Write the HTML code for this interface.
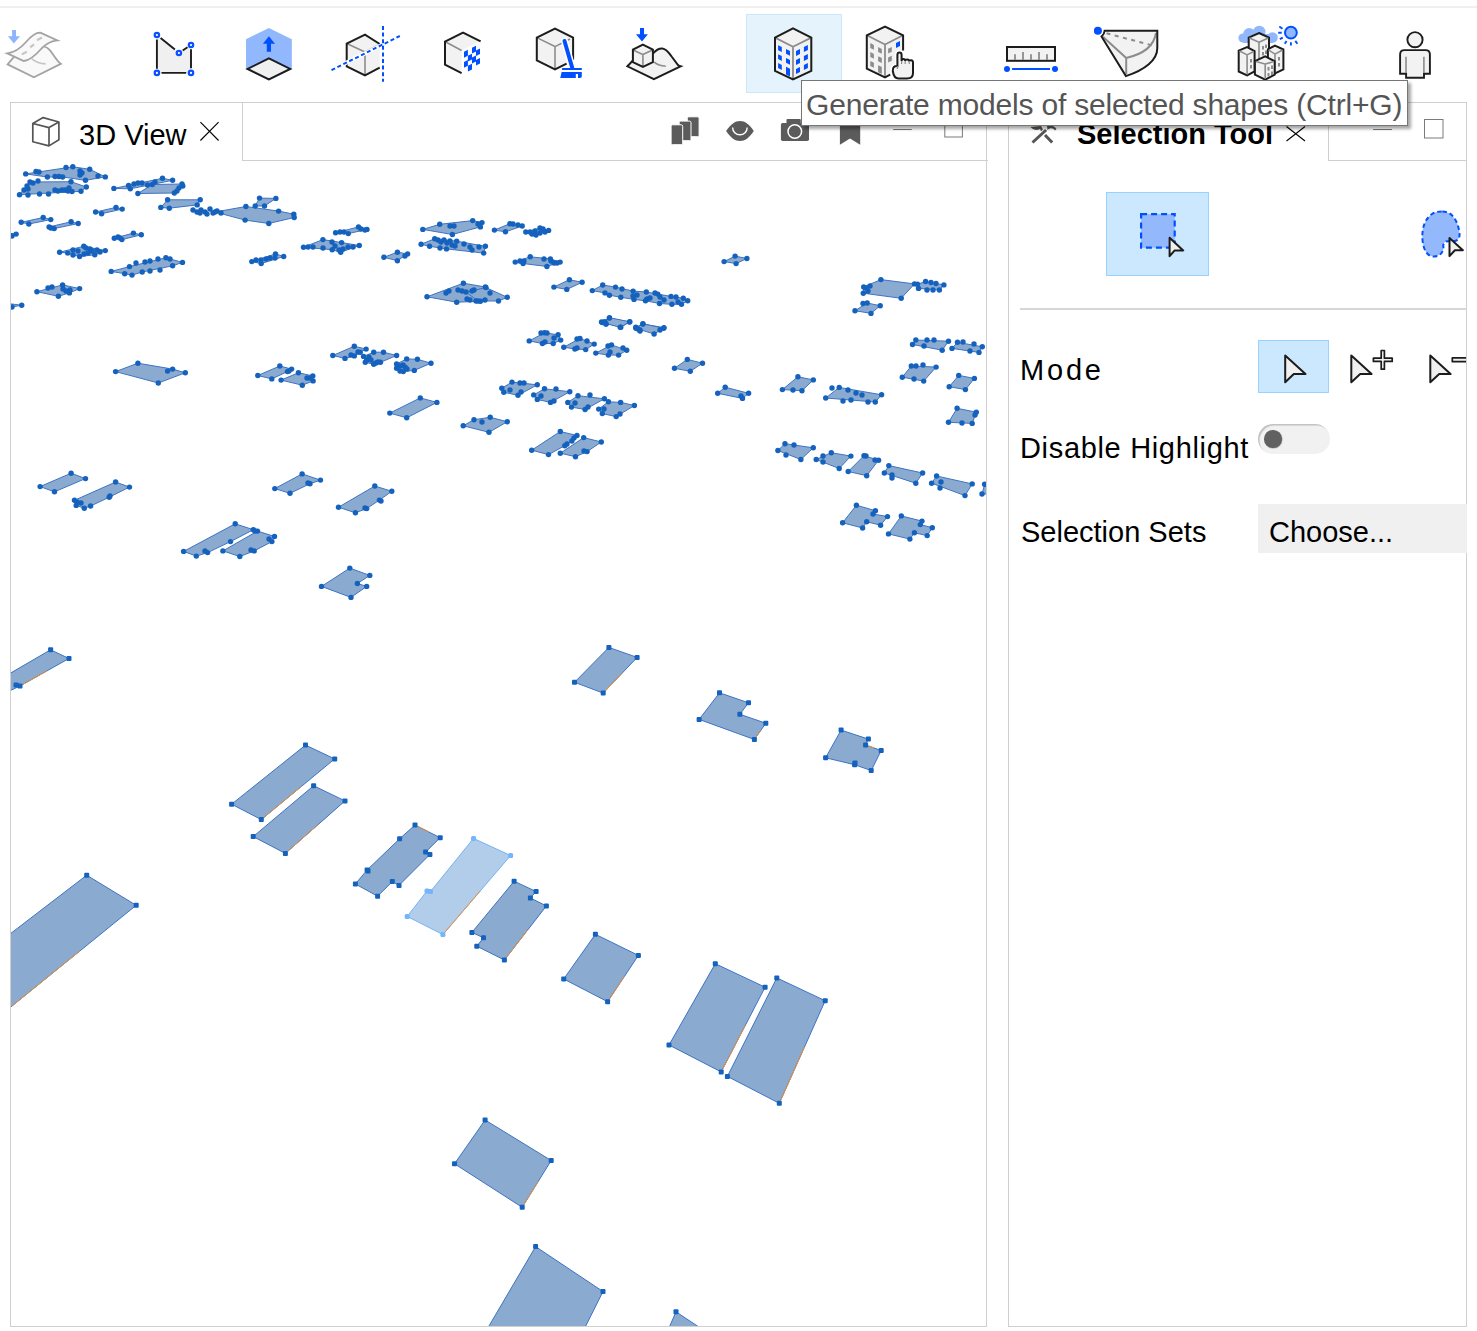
<!DOCTYPE html>
<html><head><meta charset="utf-8">
<style>
html,body{margin:0;padding:0;width:1477px;height:1331px;overflow:hidden;background:#fff;font-family:"Liberation Sans",sans-serif;}
.a{position:absolute;}
.t{position:absolute;white-space:nowrap;line-height:29px;font-size:29px;color:#000;}
.ln{position:absolute;background:#cfcfcf;}
</style></head><body>
<!-- top strip line -->
<div class="a" style="left:0;top:6px;width:1477px;height:2px;background:#efefef"></div>

<!-- toolbar highlight -->
<div class="a" style="left:746px;top:14px;width:94px;height:77px;background:#e5f3fd;border:1px solid #cde6fa"></div>

<!-- 3D view panel -->
<div class="ln" style="left:10px;top:102px;width:1px;height:1225px"></div>
<div class="ln" style="left:10px;top:102px;width:233px;height:1px"></div>
<div class="ln" style="left:242px;top:102px;width:1px;height:59px"></div>
<div class="ln" style="left:242px;top:160px;width:746px;height:1px"></div>
<div class="ln" style="left:986px;top:102px;width:1px;height:1225px"></div>
<div class="ln" style="left:10px;top:1326px;width:977px;height:1px"></div>
<div class="ln" style="left:242px;top:102px;width:745px;height:1px"></div>

<div class="t" id="t3d" style="left:79px;top:121px;">3D View</div>

<!-- right panel -->
<div class="ln" style="left:1008px;top:102px;width:1px;height:1225px"></div>
<div class="ln" style="left:1008px;top:102px;width:459px;height:1px"></div>
<div class="ln" style="left:1328px;top:102px;width:1px;height:59px"></div>
<div class="ln" style="left:1328px;top:160px;width:139px;height:1px"></div>
<div class="ln" style="left:1466px;top:102px;width:1px;height:1225px"></div>
<div class="ln" style="left:1008px;top:1326px;width:459px;height:1px"></div>

<div class="t" id="tsel" style="left:1077px;top:120px;font-weight:bold">Selection Tool</div>

<div class="a" style="left:1106px;top:192px;width:101px;height:82px;background:#cce8ff;border:1px solid #99d1ff"></div>
<div class="ln" style="left:1020px;top:308px;width:447px;height:2px;background:#d6d6d6"></div>

<div class="t" id="tmode" style="left:1020px;top:356px;letter-spacing:2.8px">Mode</div>
<div class="a" style="left:1258px;top:340px;width:69px;height:51px;background:#cce8ff;border:1px solid #99d1ff"></div>
<div class="t" id="tdis" style="left:1020px;top:434px;letter-spacing:0.67px">Disable Highlight</div>
<div class="a" style="left:1258px;top:424px;width:72px;height:30px;background:#f1f1f1;border-radius:15px;box-shadow:inset 1.5px 1.5px 1px rgba(0,0,0,0.2)"></div>
<div class="a" style="left:1264.2px;top:430px;width:17.6px;height:17.6px;background:#616161;border-radius:50%;box-shadow:0.5px 0.5px 1px rgba(0,0,0,0.3)"></div>
<div class="t" id="tsets" style="left:1021px;top:518px;">Selection Sets</div>
<div class="a" style="left:1258px;top:504px;width:209px;height:49px;background:#f0f0f0"></div>
<div class="t" id="tchoose" style="left:1269px;top:518px;">Choose...</div>

<svg class="a" style="left:0;top:0" width="1477" height="1331" viewBox="0 0 1477 1331">
<defs><clipPath id="vc"><rect x="11" y="161" width="975" height="1165"/></clipPath></defs>
<g clip-path="url(#vc)">
<g fill="#8aabcf" stroke="#3d73c5" stroke-width="1"><polygon points="50.6,649.8 69,658.5 20,686 -10,700 -10,685"/><polygon points="305.5,745.1 334.7,758.9 261.3,819.6 231.6,804.2"/><polygon points="313.6,785.7 345,800.9 285.4,853.4 253.2,836.6"/><polygon points="86.7,875.2 136.2,905.3 -20,1032 -20,957"/><polygon points="415,825 440.2,837.7 425.6,852.1 429.9,854.5 399,885.4 392.3,881.6 377.6,896.2 355.4,884 367.1,870 399.6,838.8"/><polygon points="514.1,881.2 536.1,891.5 530.4,898 546.4,905.9 504.4,960 476.8,946.2 483.5,937.8 471.9,932.4"/><polygon points="595.4,934.3 638.4,955.4 607.6,1001.7 563.7,979"/><polygon points="608.9,647.4 637.1,657.4 603.2,693.1 574.5,682.3"/><polygon points="719.5,692.8 748.5,702.8 739.9,714.3 765.8,723.2 754.4,739.5 699.1,719.4"/><polygon points="841.1,730.1 868.4,739.1 865.6,745 881.2,750.5 871.2,770.6 854.6,764.7 825.6,757.8"/><polygon points="715.3,963.7 765.1,987.2 721.2,1071.9 669,1045"/><polygon points="776.8,977.9 825.2,1000.7 779.3,1103.3 727.4,1076.4"/><polygon points="485.1,1120 551.2,1160.5 522.2,1207.3 454.5,1163.8"/><polygon points="535.6,1246.6 603,1291.5 568.7,1360 469,1360"/><polygon points="676,1311.8 726,1345 661.5,1345"/><polygon points="880.9,279.6 914.5,283.9 901.2,298.3 863.3,293.2 863.7,287"/><polygon points="917.5,284.3 925.6,281.5 943.9,284.9 939.4,290 918.5,288.4"/><polygon points="867.2,303 880.2,305.7 871,313.4 855,310.7"/><polygon points="915.8,340 948.5,341.2 942.2,350.2 912.5,344.5"/><polygon points="957.5,342.3 982.3,346.8 979,352.4 952,348.4"/><polygon points="911.3,366 936.1,367.1 923.7,381.1 902.3,377.2"/><polygon points="958.7,375.4 974.4,378.4 965.4,389.6 949.2,386.7"/><polygon points="957.1,408.3 976.3,412.2 972.2,423.4 948.5,422.3"/><polygon points="797.9,376.8 813.3,379.9 802,390.7 782.4,389.6"/><polygon points="839.2,387.4 881.6,394.8 875.3,402 825.7,398"/><polygon points="785,443.7 813.3,447.8 800.9,459.5 777.9,450.5"/><polygon points="831.3,452.7 850.9,456.1 839.2,468.5 816.2,459.5"/><polygon points="864,455.7 878.6,460.2 866.7,475.7 848.2,471.5"/><polygon points="888.8,465.6 922.6,473 915.8,483.2 884.3,473"/><polygon points="936.6,476 972.2,483.9 965,495.6 931.6,483.2"/><polygon points="984.6,484.3 1000,488 1000,494 982,494"/><polygon points="856.4,505.2 875.4,510.7 873,514 887.5,516.6 880.6,525.2 866.7,521.8 862.6,528 842.6,522.8"/><polygon points="901.3,515.9 922,521.1 920.3,524.6 932.3,527.7 927.2,535.6 914.4,532.8 909.9,539.1 888.5,533.9"/><polygon points="735.1,256.1 746.9,258.5 736.1,263.6 724.1,261.6"/><polygon points="717.7,393.3 725.2,387.2 748.6,393.3 742.5,398.4"/><polygon points="25.7,173.9 72.8,166.8 89.7,169.3 105.3,176.9 85.5,180.3 62.6,177 47.4,177"/><polygon points="30,182 71,181.7 86.3,187 81,191.3 19.5,194.7"/><polygon points="113.9,188.4 162.5,178.3 172.6,180.3 130.3,188.8"/><polygon points="152.3,184.5 182,184 182.8,186 174.3,193 137.9,193.5"/><polygon points="167.6,199.8 200.2,199.8 197.2,204.9 169.3,208.2 160.8,207.4"/><polygon points="215,212 245.9,206.5 278.6,211.1 293.8,214.2 294.2,217.5 268.8,223.5 245.1,220.1"/><polygon points="259.5,198.1 275.9,198.4 264.5,206 255.2,206"/><polygon points="95.6,212 116,207.4 122.2,209.1 101.6,213.7"/><polygon points="21.2,222.3 43.2,217.5 50.8,219.6 28.8,224"/><polygon points="49.1,226.9 71.1,221.8 78.2,223.5 54.2,228.6"/><polygon points="5,233 16.1,234.1 12,236"/><polygon points="114.3,238.2 133.4,233.1 141.3,234.8 121.9,239.6"/><polygon points="59.6,252.2 83.8,246.3 105.3,250.6 94.8,254.8 79.6,256.5 67.7,253.1"/><polygon points="111.2,271.4 129.5,266.6 165.9,257.8 182.5,262.4 172.6,265.8 142.2,272 132,275.1 124.7,273.7"/><polygon points="36.9,291.7 62.6,284.9 79.6,288.6 69.4,292.9 58.4,296.3"/><polygon points="-5,302 21.7,305.2 12,307"/><polygon points="335.6,232.8 358.5,226.9 367,229.4 348.3,233.6"/><polygon points="303.5,247.2 322.9,239.6 341.6,242.6 359.3,245.5 340.7,252.2 332.2,249.7"/><polygon points="251.8,261.6 275.5,253.9 283.7,256.5 261.2,263.6"/><polygon points="383.9,257.3 397.4,252.2 407.6,253.9 397.4,260.7"/><polygon points="422.8,229.4 439.7,224.3 472.7,220.6 482,222.6 480.4,226.9 452.4,234.5"/><polygon points="421.1,244.3 434.7,238.7 456.7,241.2 485.4,246.3 483.7,253.1 446.5,248.9 429.6,246.3"/><polygon points="427,296.8 463.4,283.2 485.4,287 480.4,301.3 456.7,302.2"/><polygon points="466,292 486,287.6 507.3,297.3 498.5,301 478,301"/><polygon points="494.4,230.1 509.9,223.7 522.2,226 505.5,231.8"/><polygon points="525.8,232 540,228 548.6,230.4 536,235"/><polygon points="515.2,262.1 530.2,256.8 550.4,258.9 560.1,262.1 546.9,266.5 523.1,263.5"/><polygon points="553.9,287.1 569.4,279.7 582.1,282.3 566.8,289.4"/><polygon points="592.3,290.6 602.7,285 615.5,287.1 633.1,291.1 646.3,292 657.8,294.1 671,296.4 683.3,298.2 687.7,300.8 681.5,304.3 671.9,304.3 659.5,303.5 645.5,300.8 634,299.4 620.8,297.3 609.4,295.2 605,292.9"/><polygon points="601.5,322 609.4,318.1 629.6,322 620.8,327.2"/><polygon points="635.8,327.2 642.8,324.1 664,327.6 660,330 640,330"/><polygon points="115.6,371.6 137.9,363.2 172.6,369.1 185.3,372.8 158.3,383"/><polygon points="71.1,473.2 85.5,478.6 54.5,491.8 40.1,486.6"/><polygon points="115.6,482 129.5,487.1 109.2,497.2 90.6,506 84.3,508.2 76.2,505.4 74.5,500.3"/><polygon points="235.2,523.8 253.3,529.7 230.5,541.6 207.6,552.6 196.3,556.1 183.6,551.4"/><polygon points="257.5,531.1 274.5,536.5 271.9,541.6 254.2,550.9 239.8,556.5 222.9,550.9"/><polygon points="302.1,473.9 320.5,480.1 310,483.7 290,493.3 274.8,488.6"/><polygon points="374.8,486 391.8,491.3 379.4,500.1 366.7,508.6 355.4,512.8 338.5,507.2"/><polygon points="349.8,568.1 369.8,575.4 357.4,583.5 366.7,586.4 351,597.4 321.5,586.4"/><polygon points="279.8,366 291.6,369.1 287.4,371.6 271.8,378.9 257.8,375.5"/><polygon points="298.4,372.8 312.8,375.9 313.1,380.9 302.3,385.2 281.1,380.1"/><polygon points="354.3,346.2 366.1,349.1 360.2,352.2 354.3,355.9 345,358.4 332.8,355.5"/><polygon points="373.7,352.2 383.5,352.2 396.6,355.5 380.5,362.3 373.7,364.3 365.3,362.3 363.6,356.4"/><polygon points="406.7,358.9 417.4,359.3 431,363.2 414.3,370.4 403.3,371.6 396.6,368.2 396.6,364"/><polygon points="420.3,397.9 436.9,402.4 406.7,417.8 389.8,413.1"/><polygon points="609.5,317.7 629.8,321.8 620.2,327.3 602.3,322.6"/><polygon points="643,323.8 663.7,328.3 654.1,334 635.9,328.3"/><polygon points="544.5,332.8 558.1,334.8 560.7,340.1 553.2,343.5 542.4,343.5 529.2,340.9"/><polygon points="580,338.4 594.2,344.1 585.7,349.6 574.9,349 563.8,347.2"/><polygon points="611.5,344.9 626.7,350.2 618.6,355.1 608.4,355.1 595.8,353.1"/><polygon points="687.3,359.4 702.5,363.2 690.3,371.3 674.5,368.3"/><polygon points="512,382.1 537.3,384.8 518,395.3 503.8,392.3 501.8,388.2"/><polygon points="544.5,388.8 569.8,391.7 550.5,402.4 537.3,399.4 533.7,394.9"/><polygon points="578,395.7 604.4,398.8 585.1,409.5 571.5,407.1 567.8,402.4"/><polygon points="608.4,401.8 620.6,402.4 634.4,405.5 616.2,416.6 602.3,413.6 598.7,409.1"/><polygon points="474,419.7 490.2,417.3 507.3,421.7 489,432.3 463.2,425.8"/><polygon points="560.3,431.5 577,435.5 571.9,441 564.8,445.7 548.5,454.6 531.7,450.2"/><polygon points="583.7,437.6 601.3,442 587.1,451.6 575.5,456.7 560.3,453.2"/></g>
<polygon points="473.5,838.4 510.6,855.5 442.9,934.6 407.2,916.4 427,891 430.5,891.5" fill="#b1cdea" stroke="#72b2f7" stroke-width="1"/>
<path d="M20,686L47,670.9M261.3,819.6L301.7,786.2M285.4,853.4L318.2,824.5M12,1006L80.3,950.6M442.9,934.6L480.1,891.1M504.4,960L527.5,930.2M607.6,1001.7L624.5,976.2M603.2,693.1L621.8,673.5M754.4,739.5L760.7,730.5M721.2,1071.9L745.3,1025.3M779.3,1103.3L804.5,1046.9M522.2,1207.3L538.2,1181.6M415,825L428.9,832M865.6,745L874.2,748" stroke="#e8903a" stroke-width="1" fill="none"/>
<g fill="#1462be"><rect x="48.1" y="647.3" width="5" height="5" rx="1"/><rect x="66.5" y="656" width="5" height="5" rx="1"/><rect x="17.5" y="683.5" width="5" height="5" rx="1"/><rect x="-12.5" y="697.5" width="5" height="5" rx="1"/><rect x="-12.5" y="682.5" width="5" height="5" rx="1"/><rect x="13.5" y="682.5" width="5" height="5" rx="1"/><rect x="303" y="742.6" width="5" height="5" rx="1"/><rect x="332.2" y="756.4" width="5" height="5" rx="1"/><rect x="258.8" y="817.1" width="5" height="5" rx="1"/><rect x="229.1" y="801.7" width="5" height="5" rx="1"/><rect x="311.1" y="783.2" width="5" height="5" rx="1"/><rect x="342.5" y="798.4" width="5" height="5" rx="1"/><rect x="282.9" y="850.9" width="5" height="5" rx="1"/><rect x="250.7" y="834.1" width="5" height="5" rx="1"/><rect x="84.2" y="872.7" width="5" height="5" rx="1"/><rect x="133.7" y="902.8" width="5" height="5" rx="1"/><rect x="-22.5" y="1029.5" width="5" height="5" rx="1"/><rect x="-22.5" y="954.5" width="5" height="5" rx="1"/><rect x="412.5" y="822.5" width="5" height="5" rx="1"/><rect x="437.7" y="835.2" width="5" height="5" rx="1"/><rect x="423.1" y="849.6" width="5" height="5" rx="1"/><rect x="427.4" y="852" width="5" height="5" rx="1"/><rect x="396.5" y="882.9" width="5" height="5" rx="1"/><rect x="389.8" y="879.1" width="5" height="5" rx="1"/><rect x="375.1" y="893.7" width="5" height="5" rx="1"/><rect x="352.9" y="881.5" width="5" height="5" rx="1"/><rect x="364.6" y="867.5" width="5" height="5" rx="1"/><rect x="397.1" y="836.3" width="5" height="5" rx="1"/><rect x="365.5" y="868.5" width="5" height="5" rx="1"/><rect x="511.6" y="878.7" width="5" height="5" rx="1"/><rect x="533.6" y="889" width="5" height="5" rx="1"/><rect x="527.9" y="895.5" width="5" height="5" rx="1"/><rect x="543.9" y="903.4" width="5" height="5" rx="1"/><rect x="501.9" y="957.5" width="5" height="5" rx="1"/><rect x="474.3" y="943.7" width="5" height="5" rx="1"/><rect x="481" y="935.3" width="5" height="5" rx="1"/><rect x="469.4" y="929.9" width="5" height="5" rx="1"/><rect x="592.9" y="931.8" width="5" height="5" rx="1"/><rect x="635.9" y="952.9" width="5" height="5" rx="1"/><rect x="605.1" y="999.2" width="5" height="5" rx="1"/><rect x="561.2" y="976.5" width="5" height="5" rx="1"/><rect x="606.4" y="644.9" width="5" height="5" rx="1"/><rect x="634.6" y="654.9" width="5" height="5" rx="1"/><rect x="600.7" y="690.6" width="5" height="5" rx="1"/><rect x="572" y="679.8" width="5" height="5" rx="1"/><rect x="717" y="690.3" width="5" height="5" rx="1"/><rect x="746" y="700.3" width="5" height="5" rx="1"/><rect x="737.4" y="711.8" width="5" height="5" rx="1"/><rect x="763.3" y="720.7" width="5" height="5" rx="1"/><rect x="751.9" y="737" width="5" height="5" rx="1"/><rect x="696.6" y="716.9" width="5" height="5" rx="1"/><rect x="838.6" y="727.6" width="5" height="5" rx="1"/><rect x="865.9" y="736.6" width="5" height="5" rx="1"/><rect x="863.1" y="742.5" width="5" height="5" rx="1"/><rect x="878.7" y="748" width="5" height="5" rx="1"/><rect x="868.7" y="768.1" width="5" height="5" rx="1"/><rect x="852.1" y="762.2" width="5" height="5" rx="1"/><rect x="823.1" y="755.3" width="5" height="5" rx="1"/><rect x="852.5" y="760.5" width="5" height="5" rx="1"/><rect x="712.8" y="961.2" width="5" height="5" rx="1"/><rect x="762.6" y="984.7" width="5" height="5" rx="1"/><rect x="718.7" y="1069.4" width="5" height="5" rx="1"/><rect x="666.5" y="1042.5" width="5" height="5" rx="1"/><rect x="774.3" y="975.4" width="5" height="5" rx="1"/><rect x="822.7" y="998.2" width="5" height="5" rx="1"/><rect x="776.8" y="1100.8" width="5" height="5" rx="1"/><rect x="724.9" y="1073.9" width="5" height="5" rx="1"/><rect x="482.6" y="1117.5" width="5" height="5" rx="1"/><rect x="548.7" y="1158" width="5" height="5" rx="1"/><rect x="519.7" y="1204.8" width="5" height="5" rx="1"/><rect x="452" y="1161.3" width="5" height="5" rx="1"/><rect x="533.1" y="1244.1" width="5" height="5" rx="1"/><rect x="600.5" y="1289" width="5" height="5" rx="1"/><rect x="566.2" y="1357.5" width="5" height="5" rx="1"/><rect x="466.5" y="1357.5" width="5" height="5" rx="1"/><rect x="673.5" y="1309.3" width="5" height="5" rx="1"/><rect x="723.5" y="1342.5" width="5" height="5" rx="1"/><rect x="659" y="1342.5" width="5" height="5" rx="1"/><circle cx="880.9" cy="279.6" r="2.7"/><circle cx="914.5" cy="283.9" r="2.7"/><circle cx="901.2" cy="298.3" r="2.7"/><circle cx="863.3" cy="293.2" r="2.7"/><circle cx="863.7" cy="287" r="2.7"/><circle cx="866" cy="288" r="2.7"/><circle cx="870" cy="286" r="2.7"/><circle cx="868" cy="291" r="2.7"/><circle cx="917.5" cy="284.3" r="2.7"/><circle cx="925.6" cy="281.5" r="2.7"/><circle cx="943.9" cy="284.9" r="2.7"/><circle cx="939.4" cy="290" r="2.7"/><circle cx="918.5" cy="288.4" r="2.7"/><circle cx="931" cy="282.5" r="2.7"/><circle cx="936" cy="283.5" r="2.7"/><circle cx="933" cy="290" r="2.7"/><circle cx="927" cy="290" r="2.7"/><circle cx="867.2" cy="303" r="2.7"/><circle cx="880.2" cy="305.7" r="2.7"/><circle cx="871" cy="313.4" r="2.7"/><circle cx="855" cy="310.7" r="2.7"/><circle cx="863" cy="303.5" r="2.7"/><circle cx="915.8" cy="340" r="2.7"/><circle cx="948.5" cy="341.2" r="2.7"/><circle cx="942.2" cy="350.2" r="2.7"/><circle cx="912.5" cy="344.5" r="2.7"/><circle cx="927" cy="340" r="2.7"/><circle cx="934" cy="340" r="2.7"/><circle cx="924" cy="346" r="2.7"/><circle cx="957.5" cy="342.3" r="2.7"/><circle cx="982.3" cy="346.8" r="2.7"/><circle cx="979" cy="352.4" r="2.7"/><circle cx="952" cy="348.4" r="2.7"/><circle cx="963" cy="342" r="2.7"/><circle cx="974" cy="344" r="2.7"/><circle cx="970" cy="351" r="2.7"/><circle cx="911.3" cy="366" r="2.7"/><circle cx="936.1" cy="367.1" r="2.7"/><circle cx="923.7" cy="381.1" r="2.7"/><circle cx="902.3" cy="377.2" r="2.7"/><circle cx="916" cy="366" r="2.7"/><circle cx="923" cy="365" r="2.7"/><circle cx="914" cy="379" r="2.7"/><circle cx="958.7" cy="375.4" r="2.7"/><circle cx="974.4" cy="378.4" r="2.7"/><circle cx="965.4" cy="389.6" r="2.7"/><circle cx="949.2" cy="386.7" r="2.7"/><circle cx="957.1" cy="408.3" r="2.7"/><circle cx="976.3" cy="412.2" r="2.7"/><circle cx="972.2" cy="423.4" r="2.7"/><circle cx="948.5" cy="422.3" r="2.7"/><circle cx="975" cy="415" r="2.7"/><circle cx="962" cy="423" r="2.7"/><circle cx="797.9" cy="376.8" r="2.7"/><circle cx="813.3" cy="379.9" r="2.7"/><circle cx="802" cy="390.7" r="2.7"/><circle cx="782.4" cy="389.6" r="2.7"/><circle cx="793" cy="390" r="2.7"/><circle cx="839.2" cy="387.4" r="2.7"/><circle cx="881.6" cy="394.8" r="2.7"/><circle cx="875.3" cy="402" r="2.7"/><circle cx="825.7" cy="398" r="2.7"/><circle cx="832" cy="388" r="2.7"/><circle cx="848" cy="390" r="2.7"/><circle cx="856" cy="393" r="2.7"/><circle cx="862" cy="395" r="2.7"/><circle cx="843" cy="401" r="2.7"/><circle cx="851" cy="400" r="2.7"/><circle cx="868" cy="402" r="2.7"/><circle cx="785" cy="443.7" r="2.7"/><circle cx="813.3" cy="447.8" r="2.7"/><circle cx="800.9" cy="459.5" r="2.7"/><circle cx="777.9" cy="450.5" r="2.7"/><circle cx="794" cy="445" r="2.7"/><circle cx="786" cy="455" r="2.7"/><circle cx="831.3" cy="452.7" r="2.7"/><circle cx="850.9" cy="456.1" r="2.7"/><circle cx="839.2" cy="468.5" r="2.7"/><circle cx="816.2" cy="459.5" r="2.7"/><circle cx="823" cy="456" r="2.7"/><circle cx="823" cy="462" r="2.7"/><circle cx="864" cy="455.7" r="2.7"/><circle cx="878.6" cy="460.2" r="2.7"/><circle cx="866.7" cy="475.7" r="2.7"/><circle cx="848.2" cy="471.5" r="2.7"/><circle cx="866" cy="456" r="2.7"/><circle cx="875" cy="460" r="2.7"/><circle cx="888.8" cy="465.6" r="2.7"/><circle cx="922.6" cy="473" r="2.7"/><circle cx="915.8" cy="483.2" r="2.7"/><circle cx="884.3" cy="473" r="2.7"/><circle cx="892" cy="475" r="2.7"/><circle cx="892" cy="478" r="2.7"/><circle cx="936.6" cy="476" r="2.7"/><circle cx="972.2" cy="483.9" r="2.7"/><circle cx="965" cy="495.6" r="2.7"/><circle cx="931.6" cy="483.2" r="2.7"/><circle cx="941" cy="482" r="2.7"/><circle cx="940" cy="488" r="2.7"/><circle cx="984.6" cy="484.3" r="2.7"/><circle cx="1000" cy="488" r="2.7"/><circle cx="1000" cy="494" r="2.7"/><circle cx="982" cy="494" r="2.7"/><circle cx="856.4" cy="505.2" r="2.7"/><circle cx="875.4" cy="510.7" r="2.7"/><circle cx="873" cy="514" r="2.7"/><circle cx="887.5" cy="516.6" r="2.7"/><circle cx="880.6" cy="525.2" r="2.7"/><circle cx="866.7" cy="521.8" r="2.7"/><circle cx="862.6" cy="528" r="2.7"/><circle cx="842.6" cy="522.8" r="2.7"/><circle cx="901.3" cy="515.9" r="2.7"/><circle cx="922" cy="521.1" r="2.7"/><circle cx="920.3" cy="524.6" r="2.7"/><circle cx="932.3" cy="527.7" r="2.7"/><circle cx="927.2" cy="535.6" r="2.7"/><circle cx="914.4" cy="532.8" r="2.7"/><circle cx="909.9" cy="539.1" r="2.7"/><circle cx="888.5" cy="533.9" r="2.7"/><circle cx="735.1" cy="256.1" r="2.7"/><circle cx="746.9" cy="258.5" r="2.7"/><circle cx="736.1" cy="263.6" r="2.7"/><circle cx="724.1" cy="261.6" r="2.7"/><circle cx="717.7" cy="393.3" r="2.7"/><circle cx="725.2" cy="387.2" r="2.7"/><circle cx="748.6" cy="393.3" r="2.7"/><circle cx="742.5" cy="398.4" r="2.7"/><circle cx="741" cy="396" r="2.7"/><circle cx="25.7" cy="173.9" r="2.7"/><circle cx="72.8" cy="166.8" r="2.7"/><circle cx="89.7" cy="169.3" r="2.7"/><circle cx="105.3" cy="176.9" r="2.7"/><circle cx="85.5" cy="180.3" r="2.7"/><circle cx="62.6" cy="177" r="2.7"/><circle cx="47.4" cy="177" r="2.7"/><circle cx="36" cy="171.5" r="2.7"/><circle cx="39" cy="172" r="2.7"/><circle cx="66" cy="167.5" r="2.7"/><circle cx="82" cy="173" r="2.7"/><circle cx="80" cy="171" r="2.7"/><circle cx="98" cy="176" r="2.7"/><circle cx="55" cy="176.5" r="2.7"/><circle cx="59" cy="176.5" r="2.7"/><circle cx="80" cy="175" r="2.7"/><circle cx="30" cy="182" r="2.7"/><circle cx="71" cy="181.7" r="2.7"/><circle cx="86.3" cy="187" r="2.7"/><circle cx="81" cy="191.3" r="2.7"/><circle cx="19.5" cy="194.7" r="2.7"/><circle cx="28" cy="195" r="2.7"/><circle cx="39.5" cy="194" r="2.7"/><circle cx="48.5" cy="194" r="2.7"/><circle cx="55" cy="190" r="2.7"/><circle cx="58" cy="191" r="2.7"/><circle cx="62" cy="190" r="2.7"/><circle cx="68" cy="191" r="2.7"/><circle cx="72" cy="191.5" r="2.7"/><circle cx="38" cy="181" r="2.7"/><circle cx="33" cy="183" r="2.7"/><circle cx="27" cy="186" r="2.7"/><circle cx="24" cy="190" r="2.7"/><circle cx="28" cy="189" r="2.7"/><circle cx="65" cy="190" r="2.7"/><circle cx="69" cy="188" r="2.7"/><circle cx="113.9" cy="188.4" r="2.7"/><circle cx="162.5" cy="178.3" r="2.7"/><circle cx="172.6" cy="180.3" r="2.7"/><circle cx="130.3" cy="188.8" r="2.7"/><circle cx="128.6" cy="185.4" r="2.7"/><circle cx="134" cy="184" r="2.7"/><circle cx="138" cy="183" r="2.7"/><circle cx="142" cy="183" r="2.7"/><circle cx="152.3" cy="184.5" r="2.7"/><circle cx="182" cy="184" r="2.7"/><circle cx="182.8" cy="186" r="2.7"/><circle cx="174.3" cy="193" r="2.7"/><circle cx="137.9" cy="193.5" r="2.7"/><circle cx="147.5" cy="185" r="2.7"/><circle cx="155" cy="182" r="2.7"/><circle cx="179" cy="188" r="2.7"/><circle cx="177" cy="191" r="2.7"/><circle cx="167.6" cy="199.8" r="2.7"/><circle cx="200.2" cy="199.8" r="2.7"/><circle cx="197.2" cy="204.9" r="2.7"/><circle cx="169.3" cy="208.2" r="2.7"/><circle cx="160.8" cy="207.4" r="2.7"/><circle cx="215" cy="212" r="2.7"/><circle cx="245.9" cy="206.5" r="2.7"/><circle cx="278.6" cy="211.1" r="2.7"/><circle cx="293.8" cy="214.2" r="2.7"/><circle cx="294.2" cy="217.5" r="2.7"/><circle cx="268.8" cy="223.5" r="2.7"/><circle cx="245.1" cy="220.1" r="2.7"/><circle cx="193" cy="210" r="2.7"/><circle cx="197" cy="212" r="2.7"/><circle cx="201" cy="210" r="2.7"/><circle cx="205" cy="212" r="2.7"/><circle cx="210" cy="209" r="2.7"/><circle cx="213" cy="213" r="2.7"/><circle cx="217" cy="211" r="2.7"/><circle cx="221" cy="213" r="2.7"/><circle cx="200" cy="213" r="2.7"/><circle cx="207" cy="214" r="2.7"/><circle cx="259.5" cy="198.1" r="2.7"/><circle cx="275.9" cy="198.4" r="2.7"/><circle cx="264.5" cy="206" r="2.7"/><circle cx="255.2" cy="206" r="2.7"/><circle cx="95.6" cy="212" r="2.7"/><circle cx="116" cy="207.4" r="2.7"/><circle cx="122.2" cy="209.1" r="2.7"/><circle cx="101.6" cy="213.7" r="2.7"/><circle cx="21.2" cy="222.3" r="2.7"/><circle cx="43.2" cy="217.5" r="2.7"/><circle cx="50.8" cy="219.6" r="2.7"/><circle cx="28.8" cy="224" r="2.7"/><circle cx="49.1" cy="226.9" r="2.7"/><circle cx="71.1" cy="221.8" r="2.7"/><circle cx="78.2" cy="223.5" r="2.7"/><circle cx="54.2" cy="228.6" r="2.7"/><circle cx="51" cy="228" r="2.7"/><circle cx="5" cy="233" r="2.7"/><circle cx="16.1" cy="234.1" r="2.7"/><circle cx="12" cy="236" r="2.7"/><circle cx="114.3" cy="238.2" r="2.7"/><circle cx="133.4" cy="233.1" r="2.7"/><circle cx="141.3" cy="234.8" r="2.7"/><circle cx="121.9" cy="239.6" r="2.7"/><circle cx="118" cy="237" r="2.7"/><circle cx="120" cy="238" r="2.7"/><circle cx="59.6" cy="252.2" r="2.7"/><circle cx="83.8" cy="246.3" r="2.7"/><circle cx="105.3" cy="250.6" r="2.7"/><circle cx="94.8" cy="254.8" r="2.7"/><circle cx="79.6" cy="256.5" r="2.7"/><circle cx="67.7" cy="253.1" r="2.7"/><circle cx="73" cy="250" r="2.7"/><circle cx="78" cy="251" r="2.7"/><circle cx="86" cy="248" r="2.7"/><circle cx="90" cy="249" r="2.7"/><circle cx="92" cy="251" r="2.7"/><circle cx="97" cy="250" r="2.7"/><circle cx="100" cy="252" r="2.7"/><circle cx="84" cy="254" r="2.7"/><circle cx="88" cy="253" r="2.7"/><circle cx="73" cy="255" r="2.7"/><circle cx="111.2" cy="271.4" r="2.7"/><circle cx="129.5" cy="266.6" r="2.7"/><circle cx="165.9" cy="257.8" r="2.7"/><circle cx="182.5" cy="262.4" r="2.7"/><circle cx="172.6" cy="265.8" r="2.7"/><circle cx="142.2" cy="272" r="2.7"/><circle cx="132" cy="275.1" r="2.7"/><circle cx="124.7" cy="273.7" r="2.7"/><circle cx="136" cy="263" r="2.7"/><circle cx="145" cy="262" r="2.7"/><circle cx="150" cy="261" r="2.7"/><circle cx="158" cy="259" r="2.7"/><circle cx="170" cy="259" r="2.7"/><circle cx="160" cy="270" r="2.7"/><circle cx="150" cy="271" r="2.7"/><circle cx="36.9" cy="291.7" r="2.7"/><circle cx="62.6" cy="284.9" r="2.7"/><circle cx="79.6" cy="288.6" r="2.7"/><circle cx="69.4" cy="292.9" r="2.7"/><circle cx="58.4" cy="296.3" r="2.7"/><circle cx="48" cy="288" r="2.7"/><circle cx="52" cy="287" r="2.7"/><circle cx="63" cy="289" r="2.7"/><circle cx="66" cy="291" r="2.7"/><circle cx="70" cy="290" r="2.7"/><circle cx="-5" cy="302" r="2.7"/><circle cx="21.7" cy="305.2" r="2.7"/><circle cx="12" cy="307" r="2.7"/><circle cx="335.6" cy="232.8" r="2.7"/><circle cx="358.5" cy="226.9" r="2.7"/><circle cx="367" cy="229.4" r="2.7"/><circle cx="348.3" cy="233.6" r="2.7"/><circle cx="340" cy="232" r="2.7"/><circle cx="344" cy="232" r="2.7"/><circle cx="361" cy="229" r="2.7"/><circle cx="365" cy="230" r="2.7"/><circle cx="303.5" cy="247.2" r="2.7"/><circle cx="322.9" cy="239.6" r="2.7"/><circle cx="341.6" cy="242.6" r="2.7"/><circle cx="359.3" cy="245.5" r="2.7"/><circle cx="340.7" cy="252.2" r="2.7"/><circle cx="332.2" cy="249.7" r="2.7"/><circle cx="308" cy="247" r="2.7"/><circle cx="313" cy="247" r="2.7"/><circle cx="323" cy="248" r="2.7"/><circle cx="332" cy="242" r="2.7"/><circle cx="335" cy="246" r="2.7"/><circle cx="339" cy="250" r="2.7"/><circle cx="343" cy="249" r="2.7"/><circle cx="348" cy="247" r="2.7"/><circle cx="353" cy="247" r="2.7"/><circle cx="251.8" cy="261.6" r="2.7"/><circle cx="275.5" cy="253.9" r="2.7"/><circle cx="283.7" cy="256.5" r="2.7"/><circle cx="261.2" cy="263.6" r="2.7"/><circle cx="256" cy="260" r="2.7"/><circle cx="261" cy="260" r="2.7"/><circle cx="266" cy="259" r="2.7"/><circle cx="270" cy="258" r="2.7"/><circle cx="275" cy="258" r="2.7"/><circle cx="383.9" cy="257.3" r="2.7"/><circle cx="397.4" cy="252.2" r="2.7"/><circle cx="407.6" cy="253.9" r="2.7"/><circle cx="397.4" cy="260.7" r="2.7"/><circle cx="405" cy="256" r="2.7"/><circle cx="422.8" cy="229.4" r="2.7"/><circle cx="439.7" cy="224.3" r="2.7"/><circle cx="472.7" cy="220.6" r="2.7"/><circle cx="482" cy="222.6" r="2.7"/><circle cx="480.4" cy="226.9" r="2.7"/><circle cx="452.4" cy="234.5" r="2.7"/><circle cx="450" cy="226" r="2.7"/><circle cx="454" cy="226" r="2.7"/><circle cx="478" cy="224" r="2.7"/><circle cx="421.1" cy="244.3" r="2.7"/><circle cx="434.7" cy="238.7" r="2.7"/><circle cx="456.7" cy="241.2" r="2.7"/><circle cx="485.4" cy="246.3" r="2.7"/><circle cx="483.7" cy="253.1" r="2.7"/><circle cx="446.5" cy="248.9" r="2.7"/><circle cx="429.6" cy="246.3" r="2.7"/><circle cx="438" cy="240" r="2.7"/><circle cx="441" cy="242" r="2.7"/><circle cx="444" cy="240" r="2.7"/><circle cx="447" cy="243" r="2.7"/><circle cx="450" cy="241" r="2.7"/><circle cx="452" cy="245" r="2.7"/><circle cx="455" cy="246" r="2.7"/><circle cx="440" cy="248" r="2.7"/><circle cx="464" cy="244" r="2.7"/><circle cx="470" cy="247" r="2.7"/><circle cx="472" cy="250" r="2.7"/><circle cx="479" cy="247" r="2.7"/><circle cx="427" cy="296.8" r="2.7"/><circle cx="463.4" cy="283.2" r="2.7"/><circle cx="485.4" cy="287" r="2.7"/><circle cx="480.4" cy="301.3" r="2.7"/><circle cx="456.7" cy="302.2" r="2.7"/><circle cx="446" cy="293" r="2.7"/><circle cx="449" cy="291" r="2.7"/><circle cx="458" cy="290" r="2.7"/><circle cx="462" cy="291" r="2.7"/><circle cx="474" cy="290" r="2.7"/><circle cx="467" cy="299" r="2.7"/><circle cx="470" cy="300" r="2.7"/><circle cx="476" cy="301" r="2.7"/><circle cx="485" cy="300" r="2.7"/><circle cx="466" cy="292" r="2.7"/><circle cx="486" cy="287.6" r="2.7"/><circle cx="507.3" cy="297.3" r="2.7"/><circle cx="498.5" cy="301" r="2.7"/><circle cx="478" cy="301" r="2.7"/><circle cx="472" cy="291" r="2.7"/><circle cx="490" cy="293" r="2.7"/><circle cx="494.4" cy="230.1" r="2.7"/><circle cx="509.9" cy="223.7" r="2.7"/><circle cx="522.2" cy="226" r="2.7"/><circle cx="505.5" cy="231.8" r="2.7"/><circle cx="513" cy="224" r="2.7"/><circle cx="518" cy="225" r="2.7"/><circle cx="525.8" cy="232" r="2.7"/><circle cx="540" cy="228" r="2.7"/><circle cx="548.6" cy="230.4" r="2.7"/><circle cx="536" cy="235" r="2.7"/><circle cx="530" cy="232" r="2.7"/><circle cx="535" cy="231" r="2.7"/><circle cx="543" cy="229" r="2.7"/><circle cx="545" cy="232" r="2.7"/><circle cx="532" cy="234" r="2.7"/><circle cx="540" cy="233" r="2.7"/><circle cx="515.2" cy="262.1" r="2.7"/><circle cx="530.2" cy="256.8" r="2.7"/><circle cx="550.4" cy="258.9" r="2.7"/><circle cx="560.1" cy="262.1" r="2.7"/><circle cx="546.9" cy="266.5" r="2.7"/><circle cx="523.1" cy="263.5" r="2.7"/><circle cx="520" cy="261" r="2.7"/><circle cx="524" cy="261" r="2.7"/><circle cx="544" cy="259" r="2.7"/><circle cx="551" cy="261" r="2.7"/><circle cx="554" cy="263" r="2.7"/><circle cx="557" cy="263" r="2.7"/><circle cx="553.9" cy="287.1" r="2.7"/><circle cx="569.4" cy="279.7" r="2.7"/><circle cx="582.1" cy="282.3" r="2.7"/><circle cx="566.8" cy="289.4" r="2.7"/><circle cx="592.3" cy="290.6" r="2.7"/><circle cx="602.7" cy="285" r="2.7"/><circle cx="615.5" cy="287.1" r="2.7"/><circle cx="633.1" cy="291.1" r="2.7"/><circle cx="646.3" cy="292" r="2.7"/><circle cx="657.8" cy="294.1" r="2.7"/><circle cx="671" cy="296.4" r="2.7"/><circle cx="683.3" cy="298.2" r="2.7"/><circle cx="687.7" cy="300.8" r="2.7"/><circle cx="681.5" cy="304.3" r="2.7"/><circle cx="671.9" cy="304.3" r="2.7"/><circle cx="659.5" cy="303.5" r="2.7"/><circle cx="645.5" cy="300.8" r="2.7"/><circle cx="634" cy="299.4" r="2.7"/><circle cx="620.8" cy="297.3" r="2.7"/><circle cx="609.4" cy="295.2" r="2.7"/><circle cx="605" cy="292.9" r="2.7"/><circle cx="622" cy="289" r="2.7"/><circle cx="633" cy="296" r="2.7"/><circle cx="637" cy="295" r="2.7"/><circle cx="647" cy="299" r="2.7"/><circle cx="650" cy="298" r="2.7"/><circle cx="655" cy="293" r="2.7"/><circle cx="660" cy="297" r="2.7"/><circle cx="664" cy="300" r="2.7"/><circle cx="676" cy="297" r="2.7"/><circle cx="678" cy="302" r="2.7"/><circle cx="601.5" cy="322" r="2.7"/><circle cx="609.4" cy="318.1" r="2.7"/><circle cx="629.6" cy="322" r="2.7"/><circle cx="620.8" cy="327.2" r="2.7"/><circle cx="604" cy="322" r="2.7"/><circle cx="606" cy="324" r="2.7"/><circle cx="635.8" cy="327.2" r="2.7"/><circle cx="642.8" cy="324.1" r="2.7"/><circle cx="664" cy="327.6" r="2.7"/><circle cx="660" cy="330" r="2.7"/><circle cx="640" cy="330" r="2.7"/><circle cx="115.6" cy="371.6" r="2.7"/><circle cx="137.9" cy="363.2" r="2.7"/><circle cx="172.6" cy="369.1" r="2.7"/><circle cx="185.3" cy="372.8" r="2.7"/><circle cx="158.3" cy="383" r="2.7"/><circle cx="167.6" cy="371.1" r="2.7"/><circle cx="71.1" cy="473.2" r="2.7"/><circle cx="85.5" cy="478.6" r="2.7"/><circle cx="54.5" cy="491.8" r="2.7"/><circle cx="40.1" cy="486.6" r="2.7"/><circle cx="115.6" cy="482" r="2.7"/><circle cx="129.5" cy="487.1" r="2.7"/><circle cx="109.2" cy="497.2" r="2.7"/><circle cx="90.6" cy="506" r="2.7"/><circle cx="84.3" cy="508.2" r="2.7"/><circle cx="76.2" cy="505.4" r="2.7"/><circle cx="74.5" cy="500.3" r="2.7"/><circle cx="81" cy="503" r="2.7"/><circle cx="77" cy="502" r="2.7"/><circle cx="110" cy="496" r="2.7"/><circle cx="235.2" cy="523.8" r="2.7"/><circle cx="253.3" cy="529.7" r="2.7"/><circle cx="230.5" cy="541.6" r="2.7"/><circle cx="207.6" cy="552.6" r="2.7"/><circle cx="196.3" cy="556.1" r="2.7"/><circle cx="183.6" cy="551.4" r="2.7"/><circle cx="205" cy="551" r="2.7"/><circle cx="257.5" cy="531.1" r="2.7"/><circle cx="274.5" cy="536.5" r="2.7"/><circle cx="271.9" cy="541.6" r="2.7"/><circle cx="254.2" cy="550.9" r="2.7"/><circle cx="239.8" cy="556.5" r="2.7"/><circle cx="222.9" cy="550.9" r="2.7"/><circle cx="255" cy="531" r="2.7"/><circle cx="269" cy="539" r="2.7"/><circle cx="251" cy="550" r="2.7"/><circle cx="302.1" cy="473.9" r="2.7"/><circle cx="320.5" cy="480.1" r="2.7"/><circle cx="310" cy="483.7" r="2.7"/><circle cx="290" cy="493.3" r="2.7"/><circle cx="274.8" cy="488.6" r="2.7"/><circle cx="308" cy="483" r="2.7"/><circle cx="374.8" cy="486" r="2.7"/><circle cx="391.8" cy="491.3" r="2.7"/><circle cx="379.4" cy="500.1" r="2.7"/><circle cx="366.7" cy="508.6" r="2.7"/><circle cx="355.4" cy="512.8" r="2.7"/><circle cx="338.5" cy="507.2" r="2.7"/><circle cx="381" cy="501" r="2.7"/><circle cx="365" cy="508" r="2.7"/><circle cx="349.8" cy="568.1" r="2.7"/><circle cx="369.8" cy="575.4" r="2.7"/><circle cx="357.4" cy="583.5" r="2.7"/><circle cx="366.7" cy="586.4" r="2.7"/><circle cx="351" cy="597.4" r="2.7"/><circle cx="321.5" cy="586.4" r="2.7"/><circle cx="279.8" cy="366" r="2.7"/><circle cx="291.6" cy="369.1" r="2.7"/><circle cx="287.4" cy="371.6" r="2.7"/><circle cx="271.8" cy="378.9" r="2.7"/><circle cx="257.8" cy="375.5" r="2.7"/><circle cx="289" cy="371" r="2.7"/><circle cx="298.4" cy="372.8" r="2.7"/><circle cx="312.8" cy="375.9" r="2.7"/><circle cx="313.1" cy="380.9" r="2.7"/><circle cx="302.3" cy="385.2" r="2.7"/><circle cx="281.1" cy="380.1" r="2.7"/><circle cx="307" cy="378" r="2.7"/><circle cx="310" cy="378" r="2.7"/><circle cx="354.3" cy="346.2" r="2.7"/><circle cx="366.1" cy="349.1" r="2.7"/><circle cx="360.2" cy="352.2" r="2.7"/><circle cx="354.3" cy="355.9" r="2.7"/><circle cx="345" cy="358.4" r="2.7"/><circle cx="332.8" cy="355.5" r="2.7"/><circle cx="351" cy="355" r="2.7"/><circle cx="358" cy="352" r="2.7"/><circle cx="373.7" cy="352.2" r="2.7"/><circle cx="383.5" cy="352.2" r="2.7"/><circle cx="396.6" cy="355.5" r="2.7"/><circle cx="380.5" cy="362.3" r="2.7"/><circle cx="373.7" cy="364.3" r="2.7"/><circle cx="365.3" cy="362.3" r="2.7"/><circle cx="363.6" cy="356.4" r="2.7"/><circle cx="367" cy="360" r="2.7"/><circle cx="369" cy="357" r="2.7"/><circle cx="371" cy="360" r="2.7"/><circle cx="376" cy="363" r="2.7"/><circle cx="378" cy="362" r="2.7"/><circle cx="406.7" cy="358.9" r="2.7"/><circle cx="417.4" cy="359.3" r="2.7"/><circle cx="431" cy="363.2" r="2.7"/><circle cx="414.3" cy="370.4" r="2.7"/><circle cx="403.3" cy="371.6" r="2.7"/><circle cx="396.6" cy="368.2" r="2.7"/><circle cx="396.6" cy="364" r="2.7"/><circle cx="400" cy="366" r="2.7"/><circle cx="403" cy="365" r="2.7"/><circle cx="405" cy="367" r="2.7"/><circle cx="407" cy="369" r="2.7"/><circle cx="400" cy="371" r="2.7"/><circle cx="420.3" cy="397.9" r="2.7"/><circle cx="436.9" cy="402.4" r="2.7"/><circle cx="406.7" cy="417.8" r="2.7"/><circle cx="389.8" cy="413.1" r="2.7"/><circle cx="609.5" cy="317.7" r="2.7"/><circle cx="629.8" cy="321.8" r="2.7"/><circle cx="620.2" cy="327.3" r="2.7"/><circle cx="602.3" cy="322.6" r="2.7"/><circle cx="605" cy="322" r="2.7"/><circle cx="606" cy="324" r="2.7"/><circle cx="643" cy="323.8" r="2.7"/><circle cx="663.7" cy="328.3" r="2.7"/><circle cx="654.1" cy="334" r="2.7"/><circle cx="635.9" cy="328.3" r="2.7"/><circle cx="638" cy="329" r="2.7"/><circle cx="640" cy="331" r="2.7"/><circle cx="544.5" cy="332.8" r="2.7"/><circle cx="558.1" cy="334.8" r="2.7"/><circle cx="560.7" cy="340.1" r="2.7"/><circle cx="553.2" cy="343.5" r="2.7"/><circle cx="542.4" cy="343.5" r="2.7"/><circle cx="529.2" cy="340.9" r="2.7"/><circle cx="541" cy="333" r="2.7"/><circle cx="547" cy="333" r="2.7"/><circle cx="554" cy="338" r="2.7"/><circle cx="545" cy="342" r="2.7"/><circle cx="580" cy="338.4" r="2.7"/><circle cx="594.2" cy="344.1" r="2.7"/><circle cx="585.7" cy="349.6" r="2.7"/><circle cx="574.9" cy="349" r="2.7"/><circle cx="563.8" cy="347.2" r="2.7"/><circle cx="577" cy="339" r="2.7"/><circle cx="587" cy="341" r="2.7"/><circle cx="577" cy="348" r="2.7"/><circle cx="611.5" cy="344.9" r="2.7"/><circle cx="626.7" cy="350.2" r="2.7"/><circle cx="618.6" cy="355.1" r="2.7"/><circle cx="608.4" cy="355.1" r="2.7"/><circle cx="595.8" cy="353.1" r="2.7"/><circle cx="608" cy="346" r="2.7"/><circle cx="623" cy="348" r="2.7"/><circle cx="610" cy="352" r="2.7"/><circle cx="687.3" cy="359.4" r="2.7"/><circle cx="702.5" cy="363.2" r="2.7"/><circle cx="690.3" cy="371.3" r="2.7"/><circle cx="674.5" cy="368.3" r="2.7"/><circle cx="512" cy="382.1" r="2.7"/><circle cx="537.3" cy="384.8" r="2.7"/><circle cx="518" cy="395.3" r="2.7"/><circle cx="503.8" cy="392.3" r="2.7"/><circle cx="501.8" cy="388.2" r="2.7"/><circle cx="520" cy="383" r="2.7"/><circle cx="524" cy="383" r="2.7"/><circle cx="521" cy="392" r="2.7"/><circle cx="510" cy="390" r="2.7"/><circle cx="544.5" cy="388.8" r="2.7"/><circle cx="569.8" cy="391.7" r="2.7"/><circle cx="550.5" cy="402.4" r="2.7"/><circle cx="537.3" cy="399.4" r="2.7"/><circle cx="533.7" cy="394.9" r="2.7"/><circle cx="556" cy="389" r="2.7"/><circle cx="554" cy="401" r="2.7"/><circle cx="541" cy="396" r="2.7"/><circle cx="578" cy="395.7" r="2.7"/><circle cx="604.4" cy="398.8" r="2.7"/><circle cx="585.1" cy="409.5" r="2.7"/><circle cx="571.5" cy="407.1" r="2.7"/><circle cx="567.8" cy="402.4" r="2.7"/><circle cx="590" cy="395" r="2.7"/><circle cx="588" cy="407" r="2.7"/><circle cx="575" cy="403" r="2.7"/><circle cx="608.4" cy="401.8" r="2.7"/><circle cx="620.6" cy="402.4" r="2.7"/><circle cx="634.4" cy="405.5" r="2.7"/><circle cx="616.2" cy="416.6" r="2.7"/><circle cx="602.3" cy="413.6" r="2.7"/><circle cx="598.7" cy="409.1" r="2.7"/><circle cx="604" cy="409" r="2.7"/><circle cx="620" cy="414" r="2.7"/><circle cx="474" cy="419.7" r="2.7"/><circle cx="490.2" cy="417.3" r="2.7"/><circle cx="507.3" cy="421.7" r="2.7"/><circle cx="489" cy="432.3" r="2.7"/><circle cx="463.2" cy="425.8" r="2.7"/><circle cx="482" cy="422" r="2.7"/><circle cx="560.3" cy="431.5" r="2.7"/><circle cx="577" cy="435.5" r="2.7"/><circle cx="571.9" cy="441" r="2.7"/><circle cx="564.8" cy="445.7" r="2.7"/><circle cx="548.5" cy="454.6" r="2.7"/><circle cx="531.7" cy="450.2" r="2.7"/><circle cx="574" cy="438" r="2.7"/><circle cx="567" cy="444" r="2.7"/><circle cx="583.7" cy="437.6" r="2.7"/><circle cx="601.3" cy="442" r="2.7"/><circle cx="587.1" cy="451.6" r="2.7"/><circle cx="575.5" cy="456.7" r="2.7"/><circle cx="560.3" cy="453.2" r="2.7"/><circle cx="584" cy="451" r="2.7"/></g>
<g fill="#74b5fb"><rect x="471" y="835.9" width="5" height="5" rx="1.5"/><rect x="508.1" y="853" width="5" height="5" rx="1.5"/><rect x="440.4" y="932.1" width="5" height="5" rx="1.5"/><rect x="404.7" y="913.9" width="5" height="5" rx="1.5"/><rect x="424.5" y="888.5" width="5" height="5" rx="1.5"/><rect x="428" y="889" width="5" height="5" rx="1.5"/></g>
</g></svg>
<svg class="a" style="left:0;top:0" width="1477" height="1331" viewBox="0 0 1477 1331" fill="none" stroke-linejoin="miter">
<!-- 1 terrain disabled -->
<g stroke="#a3a3a3" stroke-width="1.8" fill="#f9f9f9">
<path d="M14.2,56.6 L7.6,64.4 L33.9,77.2 L60.8,63.8 C58,62 56,59 52,53 C49,48.5 47,46.8 44.5,46.8"/>
<path d="M7.3,53.4 C14,52.5 19,50 26,42 C32,35 36,32.4 40.3,32.6 L57.4,40.4 C51,41 47,43 42,48 C35,56 30,60.5 23.8,61 Z"/>
</g>
<path d="M31.8,58.8 C36,62 40,63.5 45.6,63.9" stroke="#c4c4c4" stroke-width="1.6"/>
<path d="M37,40.2 L42,37.6 M30.2,47.4 L34,44.4 M21.8,54.4 L26.8,51.7" stroke="#c6c6c6" stroke-width="2.2"/>
<path d="M12.1,30 H16 V36.3 H20 L13.9,43.4 L7.9,36.3 H12.1 Z" fill="#8fb4ff"/>
<!-- 2 polygon -->
<path d="M156.9,35 L178.9,53 L191,45 L191,72.9 L156.9,72.9 Z" fill="#f0f0f0"/>
<path d="M156.9,39.5 V68.8 M161.5,72.9 H186.2 M191,49.3 V68.2 M160.6,38.1 L174.9,49.6 M182.7,50.5 L187.5,47.3" stroke="#1c1c1c" stroke-width="1.9"/>
<g stroke="#0a50ff" stroke-width="2.2" fill="#fff"><circle cx="156.9" cy="35" r="2.2"/><circle cx="191" cy="45" r="2.2"/><circle cx="178.9" cy="53" r="2.2"/><circle cx="156.9" cy="72.9" r="2.2"/><circle cx="191" cy="72.9" r="2.2"/></g>
<!-- 3 extrude -->
<path d="M268.9,27.9 L291.8,39.2 V68.9 L268.9,80.5 L246,68.9 V39.2 Z" fill="#91b7fd"/>
<path d="M268.9,58.4 L290.2,68.9 L268.9,79.4 L247.6,68.9 Z" fill="#f0f0f0" stroke="#1c1c1c" stroke-width="2"/>
<path d="M268.9,36.3 L275,43.7 H271 V51.8 H266.8 V43.7 H262.9 Z" fill="#0050ff"/>
<!-- 4 cube with axes -->
<path d="M365,34.6 L379.7,42.2 V67.7 L365,75.3 L346.7,66.3 V43.6 Z" fill="#f2f2f2"/>
<path d="M346.7,43.6 L365,52 V75.3 M365,52 L379.7,44.4" stroke="#8c8c8c" stroke-width="1.6"/>
<path d="M379.7,44 L365,34.6 L346.7,43.6 V66.3 L365,75.3 L379.7,67.7" stroke="#1c1c1c" stroke-width="2"/>
<path d="M331.5,70.1 L399.8,36" stroke="#fff" stroke-width="4"/>
<path d="M383,26 V81.8" stroke="#fff" stroke-width="4"/>
<path d="M331.5,70.1 L399.8,36" stroke="#0050ff" stroke-width="2" stroke-dasharray="4,2.6"/>
<path d="M383,26 V81.8" stroke="#0050ff" stroke-width="2" stroke-dasharray="4,2.6"/>
<!-- 5 cube checker -->
<path d="M463,32.6 L480,41 L461.6,50.5 V73.1 L445,64.7 V41.6 Z" fill="#f2f2f2"/>
<path d="M445.8,42 L461.6,50.5" stroke="#8c8c8c" stroke-width="1.6"/>
<path d="M461.6,73.1 L445,64.7 V41.6 L463,32.6 L480.6,41.3" stroke="#1c1c1c" stroke-width="2"/>
<g fill="#0050ff">
<path d="M464,51.8 L467.9,49.8 V55.8 L464,57.8 Z"/><path d="M464,62 L467.9,60 V65.8 L464,67.8 Z"/>
<path d="M467.9,55.8 L472,53.8 V59.6 L467.9,61.6 Z"/><path d="M467.9,65.8 L472,63.8 V69.6 L467.9,71.6 Z"/>
<path d="M472,47.8 L476,45.8 V51.6 L472,53.6 Z"/><path d="M472,57.6 L476,55.6 V61.6 L472,63.6 Z"/>
<path d="M476,50.5 L480,48.5 V54 L476,56 Z"/><path d="M476,60 L480,58 V63.5 L476,65.5 Z"/>
</g>
<!-- 6 cube broom -->
<path d="M555,28.7 L573.1,37.6 V60.5 L555,69.4 L536.8,60.5 V37.6 Z" fill="#f2f2f2"/>
<path d="M536.8,37.6 L555,46.6 V69.4 M555,46.6 L570,39" stroke="#8c8c8c" stroke-width="1.6"/>
<path d="M573.1,60 V37.6 L555,28.7 L536.8,37.6 V60.5 L555,69.4 L566.6,63.7" stroke="#1c1c1c" stroke-width="2"/>
<path d="M564.5,41 L572.3,68" stroke="#fff" stroke-width="7" stroke-linecap="round"/>
<path d="M564.5,41 L572.3,68" stroke="#0050ff" stroke-width="4" stroke-linecap="round"/>
<path d="M562.1,68.1 H581.8 V69.9 H562.1 Z M561.6,72.1 H581.8 V76.5 C581.8,77.3 581,77.9 580,77.9 H578 V74 H575.8 V77.9 H560.2 C561,76 561.2,73.5 561.6,72.1 Z" fill="#0050ff"/>
<!-- 7 terrain cube -->
<path d="M652.9,53.5 C656,50 659,48.3 662.3,48.5 C666,48.7 668.5,52 672,57 L678,65 C679,65.8 680,66.2 680.5,66.3 L653.9,79.2 L627.4,66.3 L632.9,60.5" fill="#f2f2f2" stroke="#1c1c1c" stroke-width="2"/>
<path d="M654.2,62.1 C657,64.5 660,65.8 665.8,66.3" stroke="#8c8c8c" stroke-width="1.6"/>
<path d="M642.9,44.7 L652.9,49.7 V62.1 L642.9,66.8 L632.9,62.1 V49.7 Z" fill="#f2f2f2"/>
<path d="M633.5,50.2 L642.9,54.5 V66.8 M642.9,54.5 L652.5,50" stroke="#8c8c8c" stroke-width="1.6"/>
<path d="M642.9,44.7 L652.9,49.7 V62.1 L642.9,66.8 L632.9,62.1 V49.7 Z" stroke="#1c1c1c" stroke-width="2"/>
<path d="M640,27.9 H644 V34.2 H647.9 L642,41.6 L636,34.2 H640 Z" fill="#0050ff"/>
<!-- 8 building -->
<path d="M793,28.4 L811.3,37.6 V70.8 L793,79.4 L775,70.8 V37.6 Z" fill="#f2f2f2"/>
<path d="M776,38.1 L793,46.8 V78.5 M793,46.8 L810.3,38.1" stroke="#8c8c8c" stroke-width="1.8"/>
<path d="M793,28.4 L811.3,37.6 V70.8 L793,79.4 L775,70.8 V37.6 Z" stroke="#1c1c1c" stroke-width="2"/>
<g fill="#0050ff">
<path d="M778.1,45.2 L781.8,47.1 V52 L778.1,50.2 Z"/><path d="M778.1,54.2 L781.8,56.1 V61 L778.1,59.1 Z"/><path d="M778.1,63.1 L781.8,65 V69.9 L778.1,68 Z"/>
<path d="M786,48.9 L790,50.9 V55.8 L786,53.8 Z"/><path d="M786,57.9 L790,59.9 V64.8 L786,62.8 Z"/><path d="M786,66.8 L790,68.8 V76.5 L786,74.4 Z"/>
<path d="M796,51 L800,49 V54 L796,56 Z"/><path d="M796,60 L800,58 V63 L796,65 Z"/><path d="M796,68.9 L800,66.9 V71.9 L796,73.9 Z"/>
<path d="M803.9,47.1 L807.9,45.1 V50.1 L803.9,52.1 Z"/><path d="M803.9,56 L807.9,54 V59 L803.9,61 Z"/><path d="M803.9,65 L807.9,63 V68 L803.9,70 Z"/>
</g>
<!-- 9 building hand -->
<path d="M885,26.6 L903.1,35.3 V68.7 L885,77.3 L866.8,68.7 V35.3 Z" fill="#f2f2f2"/>
<path d="M867.8,35.8 L885,44.5 V76.5 M885,44.5 L902.1,35.8" stroke="#8c8c8c" stroke-width="1.8"/>
<path d="M903.1,50.5 V35.3 L885,26.6 L866.8,35.3 V68.7 L885,77.3 L890.2,74.7" stroke="#1c1c1c" stroke-width="2"/>
<g fill="#8c8c8c">
<path d="M870.3,43.1 L873.9,44.9 V49.8 L870.3,48 Z"/><path d="M870.3,52.1 L873.9,53.9 V58.8 L870.3,57 Z"/><path d="M870.3,61 L873.9,62.8 V67.7 L870.3,65.9 Z"/>
<path d="M878.1,47.1 L881.8,48.9 V53.8 L878.1,52 Z"/><path d="M878.1,56.3 L881.8,58.1 V63 L878.1,61.2 Z"/><path d="M878.1,65.2 L881.8,67 V74 L878.1,72.2 Z"/>
<path d="M888.1,48.7 L891.8,46.9 V51.8 L888.1,53.6 Z"/><path d="M888.1,57.6 L891.8,55.8 V60.7 L888.1,62.5 Z"/>
</g>
<path d="M896,43.1 L900,41.1 V46.1 L896,48.1 Z" fill="#0050ff"/>
<path d="M897.4,66 L897.4,55 C897.4,51.8 901.6,51.8 901.6,55 L901.6,61 C901.6,58.3 905.2,58.3 905.2,61 C905.2,58.8 909.2,58.8 909.2,61.5 C909.2,59.8 913,59.8 913,62.5 L913,73 C913,76.5 911,78.5 907,78.5 L898.5,78.5 C895,78.5 893.5,76 892.8,71 C892.5,67.5 894.5,65.5 897.4,66 Z" fill="#f2f2f2" stroke="#fff" stroke-width="5"/>
<path d="M897.4,66 L897.4,55 C897.4,51.8 901.6,51.8 901.6,55 L901.6,61 C901.6,58.3 905.2,58.3 905.2,61 C905.2,58.8 909.2,58.8 909.2,61.5 C909.2,59.8 913,59.8 913,62.5 L913,73 C913,76.5 911,78.5 907,78.5 L898.5,78.5 C895,78.5 893.5,76 892.8,71 C892.5,67.5 894.5,65.5 897.4,66 Z" fill="#f2f2f2" stroke="#1c1c1c" stroke-width="2"/>
<path d="M897.4,66 V69 M901.6,61 V64 M905.2,61 V64 M909.2,61.5 V64" stroke="#8c8c8c" stroke-width="1.2"/>
<!-- 10 ruler -->
<rect x="1007" y="47" width="48" height="13.8" fill="#f2f2f2" stroke="#1c1c1c" stroke-width="2"/>
<path d="M1015,54.2 V60 M1023,52.1 V60 M1031,54.2 V60 M1039,52.1 V60 M1047,54.2 V60" stroke="#8c8c8c" stroke-width="1.8"/>
<path d="M1012.1,68.9 H1050" stroke="#0050ff" stroke-width="2"/>
<circle cx="1007" cy="68.9" r="3" fill="#0050ff"/><circle cx="1055" cy="68.9" r="3" fill="#0050ff"/>
<!-- 11 frustum -->
<path d="M1104.5,30.8 H1157.3 V48.2 C1157.3,60 1145,70 1125.9,76.1 L1101.5,36.5 C1103,35 1104.5,33 1104.5,30.8 Z" fill="#f2f2f2"/>
<path d="M1102.9,36.8 L1126.2,57.9 V74.2 M1126.2,57.9 Q1153,52 1156,33" stroke="#8c8c8c" stroke-width="2"/>
<path d="M1106.5,33.3 L1152.7,45.5" stroke="#8c8c8c" stroke-width="2" stroke-dasharray="4,4.5"/>
<path d="M1104.5,30.8 H1157.3 V48.2 C1157.3,60 1145,70 1125.9,76.1 L1101.5,36.5 C1103,35 1104.5,33 1104.5,30.8 Z" stroke="#1c1c1c" stroke-width="2"/>
<circle cx="1097.9" cy="30.8" r="5.5" fill="#fff"/>
<circle cx="1097.9" cy="30.8" r="4" fill="#0050ff"/>
<!-- 12 city -->
<g fill="#91b7fd"><circle cx="1249.2" cy="34" r="6"/><circle cx="1259.3" cy="32" r="6.2"/><circle cx="1272.5" cy="37.5" r="5.3"/><circle cx="1243" cy="38" r="4.6"/><rect x="1243" y="34" width="30" height="9"/></g>
<circle cx="1290.9" cy="32.7" r="5.9" fill="#91b7fd" stroke="#0050ff" stroke-width="2"/>
<path d="M1279.3,26.5 L1282.5,28.7 M1278.2,32.7 H1281.7 M1279.8,39.2 L1282.8,37.6 M1284.7,43.8 L1286.6,40.9 M1290.9,42.2 V45.5 M1295.3,40.9 L1297.4,43.8" stroke="#0050ff" stroke-width="1.9"/>
<g stroke-width="2">
<path d="M1259,33 L1269,37.6 V60 L1259,65 L1248.7,60 V37.6 Z" fill="#f2f2f2" stroke="#1c1c1c"/>
<path d="M1249.5,38 L1259,42.2 V64 M1259,42.2 L1268.3,38" stroke="#8c8c8c" stroke-width="1.6"/>
<path d="M1263,46 V49.5 M1266,44.5 V48 M1263,52 V55.5 M1266,50.5 V54" stroke="#8c8c8c" stroke-width="2"/>
<path d="M1275,45.7 L1283.4,49.5 V69.3 L1275,73.4 L1267.9,70 V49.3 Z" fill="#f2f2f2" stroke="#1c1c1c"/>
<path d="M1268.7,50 L1275,54.1 V72.5 M1275,54.1 L1282.6,50" stroke="#8c8c8c" stroke-width="1.6"/>
<path d="M1279,57 V60.5 M1279,63 V66.5" stroke="#8c8c8c" stroke-width="2"/>
<path d="M1247.1,47.1 L1254.6,51.1 V71.5 L1247.1,75.3 L1238.7,71.5 V50.6 Z" fill="#f2f2f2" stroke="#1c1c1c"/>
<path d="M1239.5,51 L1247.1,54.9 V74.5 M1247.1,54.9 L1253.8,51.5" stroke="#8c8c8c" stroke-width="1.6"/>
<path d="M1251,59 V62.5 M1251,65 V68.5" stroke="#8c8c8c" stroke-width="2"/>
<path d="M1265.2,56.3 L1274.7,61.2 V74.7 L1265.2,79.6 L1254.9,74.7 V61.2 Z" fill="#f2f2f2" stroke="#1c1c1c"/>
<path d="M1255.8,61.6 L1265.2,64.1 V78.8 M1265.2,64.1 L1273.9,61.6" stroke="#8c8c8c" stroke-width="1.6"/>
<path d="M1268.5,67 V70.5 M1272,65.5 V69 M1268.5,73 V76.5 M1272,71.5 V75" stroke="#8c8c8c" stroke-width="2"/>
</g>
<!-- 13 person -->
<circle cx="1415" cy="39.7" r="7.6" fill="#f2f2f2" stroke="#1c1c1c" stroke-width="1.9"/>
<path d="M1400.1,73.8 V54.5 C1400.1,51.5 1401.5,50.1 1404.5,50.1 H1425.5 C1428.5,50.1 1429.9,51.5 1429.9,54.5 V73.8 H1424 V77.8 H1406.1 V73.8 Z" fill="#f2f2f2" stroke="#1c1c1c" stroke-width="1.9"/>
<path d="M1406,56.8 V73.1 M1423.9,56.8 V73.1" stroke="#8c8c8c" stroke-width="1.6"/>

<!-- 3D view tab icon -->
<path d="M43.1,117.6 L58.9,122 V139.8 L49,145.9 L32.8,141.7 V123.5 Z M32.8,123.5 L49,127.6 L58.9,122 M49,127.6 V145.9" stroke="#555" stroke-width="1.7" stroke-linejoin="round"/>
<path d="M200.4,122.2 L218.6,140.5 M218.6,122.2 L200.4,140.5" stroke="#000" stroke-width="1.1"/>
<!-- 3D view toolbar -->
<g fill="#5b5b5b" stroke="#fff" stroke-width="1">
<rect x="687.3" y="116.8" width="11.8" height="19.9" rx="1.5"/>
<rect x="679.2" y="121.1" width="11.8" height="19.6" rx="1.5"/>
<rect x="671.1" y="124.8" width="11.6" height="19.9" rx="1.5"/>
</g>
<path d="M726.1,131 C731,124 735,121 739.9,121 C745,121 749,124 753.8,131 C749,138 745,141 739.9,141 C735,141 731,138 726.1,131 Z" fill="#5b5b5b"/>
<path d="M732.6,127.5 A7.3,7.3 0 1 0 747.2,127.5" stroke="#fff" stroke-width="1.4"/>
<rect x="780.9" y="122.9" width="28.1" height="18.1" rx="1.8" fill="#5b5b5b"/>
<rect x="786.5" y="119.1" width="14.3" height="5" rx="1" fill="#5b5b5b"/>
<circle cx="794.8" cy="131.5" r="6.8" stroke="#fff" stroke-width="1.5"/>
<path d="M839.9,118 H860.2 V144.7 L850,138.6 L839.9,144.7 Z" fill="#5b5b5b"/>
<path d="M893.2,129.5 H911.8" stroke="#7a7a7a" stroke-width="1"/>
<rect x="944.8" y="119" width="17.6" height="18" stroke="#7a7a7a" stroke-width="1"/>

<!-- selection tool tab -->
<path d="M1032.5,142.5 L1046.1,130 M1045,135 L1052.2,142.5" stroke="#555" stroke-width="3"/>
<path d="M1030.5,127 C1033,130 1037,131 1040,129 L1041,131.5 L1043,129.5 L1041,126 Z M1047,126 L1047.5,130 C1050,127.5 1053,127.5 1055,130.5 L1056.5,129 C1054,125.5 1050,125 1047,126 Z" fill="#555"/>
<path d="M1286.5,126.5 L1305,141 M1305,126.5 L1286.5,141" stroke="#000" stroke-width="1.1"/>
<path d="M1373,129.5 H1392" stroke="#7a7a7a" stroke-width="1"/>
<rect x="1424.5" y="119.5" width="18.5" height="18.5" stroke="#7a7a7a" stroke-width="1"/>

<!-- selection icons -->
<rect x="1141.1" y="214.1" width="33.6" height="33.6" fill="#94b8fc" stroke="#0050ff" stroke-width="2.2" stroke-dasharray="6,4"/>
<path d="M1169.6,237.7 L1183.2,250.4 H1174.7 L1169.6,256.2 Z" fill="#f0f0f0" stroke="#1c1c1c" stroke-width="2" stroke-linejoin="round"/>
<path d="M1442.3,211.5 C1452,211.5 1457,220 1459,230 C1460.5,237 1459,240 1455,241 C1451,241 1449,240.5 1446,241.5 C1443,243 1443,246 1443.5,248 C1443,253 1439,256.5 1434,256.5 C1427,256.5 1423.5,250 1422.5,240 C1421.5,228 1425,219 1432,214 C1435,212 1438,211.5 1442.3,211.5 Z" fill="#94b8fc" stroke="#0050ff" stroke-width="2" stroke-dasharray="4.5,3"/>
<path d="M1449.5,238 L1462.9,250.2 H1454.9 L1449.5,256.1 Z" fill="#f0f0f0" stroke="#1c1c1c" stroke-width="2" stroke-linejoin="round"/>
<!-- mode icons -->
<g fill="#f0f0f0" stroke="#1c1c1c" stroke-width="2" stroke-linejoin="round">
<path d="M1285.2,355.5 L1305.5,374 H1293.8 L1285.2,382.3 Z"/>
<path d="M1351.3,355.5 L1371.6,374 H1360.2 L1351.3,382.3 Z"/>
<path d="M1430.3,355.5 L1450.6,374 H1439.2 L1430.3,382.3 Z"/>
<path d="M1381.2,350.5 H1384.4 V358.2 H1392.2 V361.4 H1384.4 V369.2 H1381.2 V361.4 H1373.4 V358.2 H1381.2 Z" stroke-width="1.7"/>
<path d="M1466,357.9 H1452.3 V361.7 H1466" stroke-width="1.7"/>
</g>
</svg>

<!-- tooltip -->
<div class="a" style="left:801px;top:80px;width:605px;height:44px;background:#fff;border:1px solid #767676;box-shadow:3px 3px 3px rgba(0,0,0,0.35)"></div>
<div class="t" id="ttip" style="left:806px;top:90px;font-size:30px;letter-spacing:-0.19px;color:#555">Generate models of selected shapes (Ctrl+G)</div>
</body></html>
